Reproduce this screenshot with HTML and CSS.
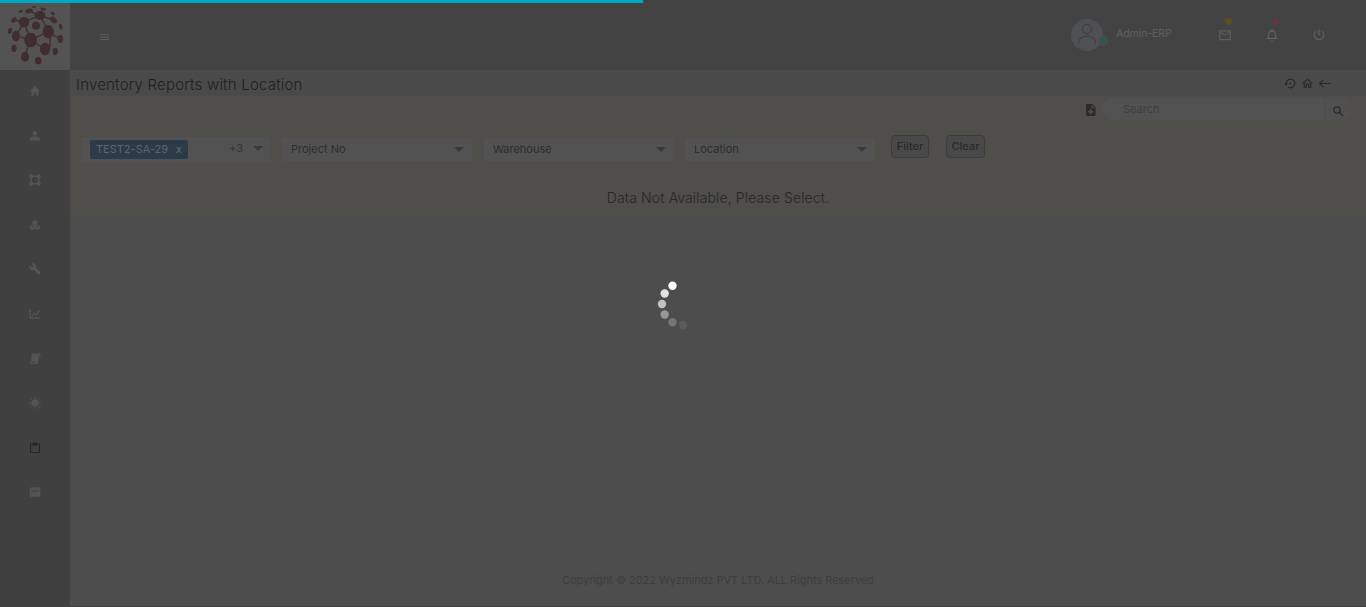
FILE: index.html
```html
<!DOCTYPE html>
<html lang="en">
<head>
<meta charset="utf-8">
<title>Inventory Reports with Location</title>
<link rel="stylesheet" href="styles.css">
</head>
<body>
<div class="app">
  <aside class="sidebar">
    <div class="logo">
      <svg width="70" height="70" viewBox="0 0 210 210" fill="#402d2e">
        <g stroke="#402d2e" stroke-width="4" fill="none">
          <path d="M120 46L72 66L48 107L92 120L72 66M120 46L145 94L92 120L135 147L150 140L151 100L181 117M92 120L74 168M120 46L159 60M120 46L87 33M135 147L121 155M120 46L128 26M72 66L42 60"/>
        </g>
        <ellipse cx="120" cy="46" rx="16" ry="13"/><ellipse cx="72" cy="66" rx="16" ry="16"/>
        <circle cx="108" cy="77" r="12"/><ellipse cx="145" cy="95" rx="17" ry="20"/>
        <ellipse cx="92" cy="120" rx="19" ry="22"/><ellipse cx="48" cy="108" rx="12" ry="16"/>
        <ellipse cx="135" cy="147" rx="15" ry="19"/><ellipse cx="75" cy="170" rx="12" ry="15"/>
        <ellipse cx="115" cy="182" rx="10" ry="11"/><ellipse cx="42" cy="145" rx="8" ry="11"/>
        <ellipse cx="166" cy="154" rx="8" ry="11"/><ellipse cx="181" cy="117" rx="8" ry="12"/>
        <ellipse cx="160" cy="60" rx="12" ry="8" transform="rotate(40 160 60)"/>
        <ellipse cx="182" cy="80" rx="5" ry="9" transform="rotate(-20 182 80)"/>
        <ellipse cx="30" cy="92" rx="6" ry="9" transform="rotate(15 30 92)"/>
        <ellipse cx="42" cy="60" rx="9" ry="7" transform="rotate(-40 42 60)"/>
        <ellipse cx="87" cy="33" rx="12" ry="7" transform="rotate(-12 87 33)"/>
        <ellipse cx="130" cy="27" rx="9" ry="4" transform="rotate(15 130 27)"/>
        <ellipse cx="102" cy="21" rx="6" ry="3"/>
        <ellipse cx="62" cy="34" rx="7" ry="4" transform="rotate(-25 62 34)"/>
        <ellipse cx="158" cy="41" rx="7" ry="4" transform="rotate(35 158 41)"/>
      </svg>
    </div>
    <nav class="menu">
      <a><svg viewBox="0 0 24 24"><path d="M10 21v-6h4v6h5v-9h3L12 2 2 12h3v9z"/></svg></a>
      <a><svg viewBox="0 0 24 24"><path d="M12 11a4.500 4.500 0 1 0 0-9 4.500 4.500 0 0 0 0 9zm0 2c-3 0-10 1.300-10 5v3h20v-3c0-3.700-7-5-10-5z"/></svg></a>
      <a><svg viewBox="0 0 24 24"><path d="M1 1h7v2h8V1h7v7h-2v8h2v7h-7v-2H8v2H1v-7h2V8H1zm7 5v2H6v8h2v2h8v-2h2V8h-2V6z"/></svg></a>
      <a><svg viewBox="0 0 24 24"><path d="M12 2l5 2.500v5.500l-4 2v2l4-2 5 2.500v5L17 22l-5-2.500L7 22l-5-2.500v-5L7 12l4 2v-2l-4-2V4.500zM7 15l-3 1.200 3 1.500 3-1.500zm10 0l-3 1.200 3 1.500 3-1.500z"/></svg></a>
      <a><svg viewBox="0 0 24 24"><path d="M23 19l-9-9.500c.9-2.300.4-5-1.500-6.900-2-2-5-2.400-7.400-1.300L9.500 6 6 9.500 1.300 4.700C.1 7.100.6 10.500 2.600 12.500c1.900 1.900 4.600 2.400 6.900 1.500l9.400 9.100c.4.4 1 .4 1.400 0l2.700-2.700c.5-.4.5-1 0-1.400z"/></svg></a>
      <a><svg viewBox="0 0 24 24"><path d="M1 2h2.500v17H23v2.500H1zM5 17l4.500-9 5 4 5-8 2.500 1.500-6.500 10-5-4L8 17z"/></svg></a>
      <a><svg viewBox="0 0 24 24"><path d="M8 1h12c2 0 3 1 3 3v3h-4v11c0 2.500-1.500 4-4 4H5c-2 0-4-2-4-5h4V4c0-2 1-3 3-3zM5 19c.5 1 1 1 2 1h7c-1-.5-1-1-1-2H4z"/></svg></a>
      <a><svg viewBox="0 0 24 24"><circle cx="12" cy="12" r="7"/><path d="M11 0h2v4h-2zM11 20h2v4h-2zM0 11h4v2H0zM20 11h4v2h-4zM3 4l2-1 2 3-1 1zM21 4l-2-1-2 3 1 1zM3 20l2 1 2-3-1-1zM21 20l-2 1-2-3 1-1z"/></svg></a>
      <a class="active"><svg viewBox="0 0 24 24"><path d="M20 3h-4V1H8v2H4a2 2 0 0 0-2 2v15a2 2 0 0 0 2 2h16a2 2 0 0 0 2-2V5a2 2 0 0 0-2-2zm0 17H4V5h3v2h10V5h3z"/></svg></a>
      <a><svg viewBox="0 0 24 24"><path fill-rule="evenodd" d="M4 3h16a2.500 2.500 0 0 1 2.500 2v14a2.500 2.500 0 0 1-2.500 2.500H4A2.500 2.500 0 0 1 1.500 19V5A2.500 2.500 0 0 1 4 3zm0 6v2.500h16V9z"/></svg></a>
    </nav>
  </aside>
  <div class="content">
    <header class="topbar">
      <svg class="burger" width="9" height="7" viewBox="0 0 9 7"><path fill="#5b5b5b" d="M0 0h9v1H0zM0 2.500h9v1.200H0zM0 5h9v1H0z"/></svg>
      <div class="user">
        <div class="avatar">
          <svg width="32" height="32" viewBox="0 0 32 32" fill="none" stroke="#363c49"><circle cx="16" cy="10" r="4.600"/><path d="M7.500 25v-1c0-4 3.500-7 8.500-7s8.500 3 8.500 7v1"/></svg>
          <i class="status"></i>
        </div>
        <span class="user-name">Admin-ERP</span>
        <svg class="caret" width="6" height="4" viewBox="0 0 6 4" fill="none" stroke="#49394f"><path d="M.5.500L3 3 5.500.500"/></svg>
      </div>
      <div class="tool mail"><i class="dot"></i><svg viewBox="0 0 24 24"><path d="M22 4H2v17h20zm-2 2l-8 5-8-5zm0 13H4V8l8 5 8-5z"/></svg></div>
      <div class="tool bell"><i class="dot"></i><svg viewBox="0 0 24 24"><path d="M12 23a2 2 0 0 0 2-2h-4c0 1.100.9 2 2 2zm7-7v-5c0-3.500-2-6-5-6.700V2h-4v2.300C7 5 5 7.500 5 11v5l-3 2v1h20v-1zm-2 1H7v-6c0-2.500 1.500-4.700 5-4.700s5 2.200 5 4.700z"/></svg></div>
      <div class="tool power"><svg viewBox="0 0 24 24"><path d="M11 2h2v11h-2zM17.700 4.500l-1.500 1.600a7 7 0 1 1-8.400 0L6.300 4.500a9.300 9.300 0 1 0 11.400 0z"/></svg></div>
    </header>
    <div class="titlebar">
      <h1>Inventory Reports with Location</h1>
      <div class="actions">
        <svg viewBox="0 0 24 24"><path d="M14 12a2 2 0 1 0-4 0 2 2 0 0 0 4 0zM12 3a9 9 0 0 0-9 9H0l4 4 4-4H5a7 7 0 1 1 3 5.700l-1.400 1.400A9 9 0 1 0 12 3z"/></svg>
        <svg viewBox="0 0 24 24"><path d="M12 3L2 12h3v8h6v-6h2v6h6v-8h3zm0 2.700l5 4.500V18h-2v-6H9v6H7v-7.800z"/></svg>
        <svg viewBox="0 0 24 24"><path d="M23 11H5.500l5-5L9 4.500 1.500 12 9 19.500l1.500-1.500-5-5H23z"/></svg>
      </div>
    </div>
    <main class="panel">
      <div class="search-row">
        <svg class="export" width="11" height="14" viewBox="0 0 11 14"><path fill="#292b2c" fill-rule="evenodd" d="M2 1h5l3.500 3.500V12a1 1 0 0 1-1 1H2a1 1 0 0 1-1-1V2a1 1 0 0 1 1-1zm4.500 1v3h3zM5 6v2H3v1.500h2v2h1.500v-2h2V8h-2V6z"/></svg>
        <div class="search"><span>Search</span><div class="go"><svg width="11" height="11" viewBox="0 0 11 11" fill="none" stroke="#2b2b2b" stroke-width="1.300"><circle cx="4" cy="4" r="3.200"/><path d="M6.500 6.500l3.800 3.800"/></svg></div></div>
      </div>
      <div class="filters">
        <div class="select multi"><span class="chip">TEST2-SA-29 <b>x</b></span><span class="more">+3</span><i class="arrow"></i></div>
        <div class="select project">Project No<i class="arrow"></i></div>
        <div class="select warehouse">Warehouse<i class="arrow"></i></div>
        <div class="select location">Location<i class="arrow"></i></div>
        <div class="btn filter">Filter</div>
        <div class="btn clear">Clear</div>
      </div>
      <p class="empty">Data Not Available, Please Select.</p>
    </main>
    <footer>Copyright © 2022 Wyzmindz PVT LTD. ALL Rights Reserved</footer>
  </div>
</div>
<div class="progress"></div>
<svg class="spinner" width="70" height="70" viewBox="0 0 70 70" fill="#fff">
  <circle cx="32.500" cy="15.700" r="4.200"/>
  <circle cx="24.700" cy="23.500" r="4.200" opacity=".84"/>
  <circle cx="22" cy="34" r="4.200" opacity=".66"/>
  <circle cx="24.700" cy="44.500" r="4.200" opacity=".42"/>
  <circle cx="32.500" cy="52.200" r="4.200" opacity=".23"/>
  <circle cx="43" cy="55" r="4.200" opacity=".08"/>
</svg>
</body>
</html>
```
FILE: styles.css
```css
* { box-sizing: border-box; }
body { margin: 0; font-family: Inter, "Liberation Sans", sans-serif; background: #4d4d4d; overflow: hidden; }
svg { display: block; flex: none; }
.app { display: flex; height: 607px; border-bottom: 1px solid #404040; }
.sidebar { width: 70px; background: #404040; flex: none; }
.logo { height: 70px; background: #535353; }
.menu { display: flex; flex-direction: column; align-items: center; }
.menu a { height: 44.600px; display: flex; align-items: center; padding-bottom: 2.500px; }
.menu svg { width: 12px; height: 12px; fill: #545454; }
.menu .active svg { fill: #252525; }
.content { flex: 1; display: flex; flex-direction: column; min-width: 0; }
.topbar { height: 70px; background: #434343; display: flex; padding-left: 30px; flex: none; }
.burger { margin-top: 34px; }
.user { display: flex; margin-left: 962px; padding-top: 19px; width: 134px; }
.avatar { width: 32px; height: 32px; border-radius: 50%; background: #4f5051; position: relative; flex: none; }
.status { position: absolute; right: -5px; bottom: 5px; width: 10px; height: 10px; border-radius: 50%; background: #245d4d; border: 2px solid #4c4c4c; }
.user-name { font-size: 10.500px; font-weight: 500; line-height: 14px; margin: 8px 0 0 13px; color: #5c5c5c; white-space: nowrap; letter-spacing: -.15px; }
.caret { margin: 14px 0 0 6px; }
.tool { width: 47px; padding-top: 28px; position: relative; }
.tool svg { width: 14px; height: 14px; margin-left: 13px; fill: #5e5e5e; }
.dot { position: absolute; left: 20px; top: 18px; width: 7px; height: 7px; border-radius: 50%; background: #5a501f; }
.bell .dot { background: #5e3a3e; }
.titlebar { height: 26px; background: #4a4a4a; display: flex; justify-content: space-between; padding: 0 35px 0 6px; flex: none; }
h1 { margin: 5px 0 0; font-size: 15px; line-height: 20px; font-weight: 300; letter-spacing: .2px; color: #1e2022; white-space: nowrap; }
.actions { display: flex; gap: 4px; padding-top: 7px; }
.actions svg { width: 13px; height: 13px; fill: #282828; }
.panel { height: 121px; background: #4f4e4b; flex: none; }
.search-row { display: flex; justify-content: flex-end; padding: 2px 14px 0 0; height: 39px; }
.export { margin: 5px 6px 0 0; }
.search { width: 250px; height: 22px; border-radius: 11px; background: #525252; display: flex; justify-content: space-between; font-size: 11px; line-height: 22px; padding-left: 21px; color: #3f3f3f; overflow: hidden; }
.go { width: 28px; background: #505050; border-left: 1px solid #4b4b4b; padding: 8px 0 0 8px; }
.filters { display: flex; padding-left: 11px; height: 44px; }
.select { width: 190px; height: 23px; margin: 3px 12px 0 0; background: #525252; font-size: 11px; line-height: 23px; padding: 0 8px 0 9px; color: #2d2d2d; display: flex; justify-content: space-between; }
.warehouse { width: 189px; padding-right: 7px; }
.multi { height: 25px; width: 189px; margin-top: 2px; padding: 3px 8px 0 9px; justify-content: flex-start; }
.arrow { width: 0; height: 0; border: 5px solid transparent; border-top-color: #3a3a3a; border-bottom: 0; margin-top: 9px; flex: none; }
.multi .arrow { margin: 6px 0 0 10px; }
.chip { height: 19px; width: 98px; flex: none; border-radius: 2px; background: #2c3b49; color: #5f656b; line-height: 19px; padding: 0 6px; display: flex; justify-content: space-between; white-space: nowrap; }
.chip b { font-weight: 500; }
.more { line-height: 17px; margin-left: 41px; color: #333; width: 14px; flex: none; white-space: nowrap; }
.btn { height: 23px; border: 1px solid #3c3c3d; border-radius: 4px; background: #49494a; color: #29292b; font-size: 11px; font-weight: 500; line-height: 21px; text-align: center; }
.filter { width: 38px; margin-left: 4px; }
.clear { width: 39px; margin-left: 17px; }
.empty { margin: 9px 0 0; text-align: center; font-size: 14px; line-height: 20px; font-weight: 300; letter-spacing: .13px; color: #262626; }
footer { margin: auto 0 18px; text-align: center; font-size: 11px; line-height: 16px; letter-spacing: -.03px; color: #3e3e3e; }
.progress { position: absolute; left: 0; top: 0; width: 643px; height: 3px; background: #00a9c2; }
.spinner { position: absolute; left: 640px; top: 270px; }
```
